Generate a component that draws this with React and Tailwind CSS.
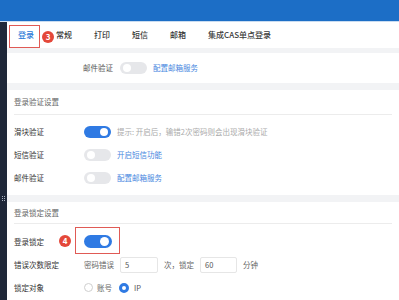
import { useState } from "react";

const font = { fontFamily: '"Noto Sans CJK SC", "Noto Sans", sans-serif' };

const Toggle = ({ on, big }) => (
  <div
    className={`relative rounded-full shrink-0 ${big ? "w-[28px] h-[13px]" : "w-[27px] h-[12px]"} ${
      on ? "bg-[#2f7ae3]" : "bg-[#e6e7ea]"
    }`}
  >
    <div
      className={`absolute top-[2px] rounded-full bg-white ${big ? "w-[9px] h-[9px]" : "w-[8px] h-[8px]"} ${
        on ? "right-[3px]" : "left-[3px]"
      }`}
    />
  </div>
);

const Badge = ({ n, className }) => (
  <div
    className={`absolute w-[12px] h-[12px] rounded-full bg-[#e4483a] text-white text-[8px] font-semibold flex items-center justify-center leading-none ${className}`}
  >
    {n}
  </div>
);

const Row = ({ label, children }) => (
  <div className="flex items-center h-[23px]">
    <div className="w-[70px] shrink-0 text-[#333]">{label}</div>
    <div className="flex items-center gap-[6px]">{children}</div>
  </div>
);

const Link = ({ children }) => <span className="text-[#4787e0]">{children}</span>;

export default function App() {
  const tabs = ["登录", "常规", "打印", "短信", "邮箱", "集成CAS单点登录"];
  const [active] = useState(0);

  return (
    <div
      className="relative w-[399px] h-[300px] overflow-hidden flex flex-col bg-[#f2f3f5] text-[7.5px] leading-none"
      style={font}
    >
      {/* top bar */}
      <div className="h-[22px] shrink-0 bg-[#1c6ec6] border-b border-[#c9dcf1]" />

      <div className="flex flex-1 min-h-0">
        {/* side strip */}
        <div className="relative w-[7px] shrink-0 bg-[#1f2839]">
          <div className="absolute left-[2px] top-[174px] grid grid-cols-2 gap-[1px]">
            {[0, 1, 2, 3, 4, 5].map((i) => (
              <div key={i} className="w-[1px] h-[1px] bg-[#aab3c2]" />
            ))}
          </div>
        </div>

        <div className="flex-1 flex flex-col">
          {/* tabs */}
          <div className="h-[26px] shrink-0 bg-white flex items-center">
            {tabs.map((t, i) => (
              <div
                key={t}
                className={`px-[11px] h-full flex items-center text-[8px] font-medium ${
                  i === active ? "text-[#2d7ad8]" : "text-[#3a3a3a]"
                }`}
              >
                {t}
              </div>
            ))}
          </div>

          {/* leftover row */}
          <div className="mt-[5px] h-[30px] shrink-0 bg-white flex items-center px-[7px]">
            <div className="w-[99px] text-right text-[#555]">邮件验证</div>
            <div className="ml-[7px]">
              <Toggle />
            </div>
            <div className="ml-[6px]">
              <Link>配置邮箱服务</Link>
            </div>
          </div>

          {/* login verification */}
          <div className="mt-[7px] shrink-0 bg-white px-[7px] pb-[6px]">
            <div className="h-[25px] flex items-center border-b border-[#ececec] text-[#666]">
              登录验证设置
            </div>
            <div className="pt-[5px]">
              <Row label="滑块验证">
                <Toggle on />
                <span className="text-[#aaa]">提示: 开启后，输错2次密码则会出现滑块验证</span>
              </Row>
              <Row label="短信验证">
                <Toggle />
                <Link>开启短信功能</Link>
              </Row>
              <Row label="邮件验证">
                <Toggle />
                <Link>配置邮箱服务</Link>
              </Row>
            </div>
          </div>

          {/* login lock */}
          <div className="mt-[7px] flex-1 bg-white px-[7px]">
            <div className="h-[22px] flex items-center border-b border-[#ececec] text-[#666]">
              登录锁定设置
            </div>
            <div className="pt-[6px]">
              <Row label="登录锁定">
                <Toggle on big />
              </Row>
              <Row label="错误次数限定">
                <span className="text-[#666]">密码错误</span>
                <div className="w-[38px] h-[16px] border border-[#e6e6e6] rounded-[2px] flex items-center px-[4px] text-[#555]">
                  5
                </div>
                <span className="text-[#666]">次，锁定</span>
                <div className="w-[37px] h-[16px] border border-[#e6e6e6] rounded-[2px] flex items-center px-[4px] text-[#555]">
                  60
                </div>
                <span className="text-[#666]">分钟</span>
              </Row>
              <Row label="锁定对象">
                <div className="w-[9px] h-[9px] rounded-full border border-[#cfcfcf] bg-white" />
                <span className="text-[#666] -ml-[2px]">账号</span>
                <div className="ml-[1px] w-[10px] h-[10px] rounded-full border-[3px] border-[#2f7ae3] bg-white" />
                <span className="text-[#555] -ml-[1px]">IP</span>
              </Row>
            </div>
          </div>
        </div>
      </div>

      {/* annotations */}
      <div className="absolute left-[9px] top-[25px] w-[31px] h-[23px] border border-[#e05a55]" />
      <Badge n="3" className="left-[42px] top-[31px]" />
      <div className="absolute left-[75px] top-[227px] w-[45px] h-[27px] border border-[#e05a55]" />
      <Badge n="4" className="left-[59px] top-[235px]" />
    </div>
  );
}
